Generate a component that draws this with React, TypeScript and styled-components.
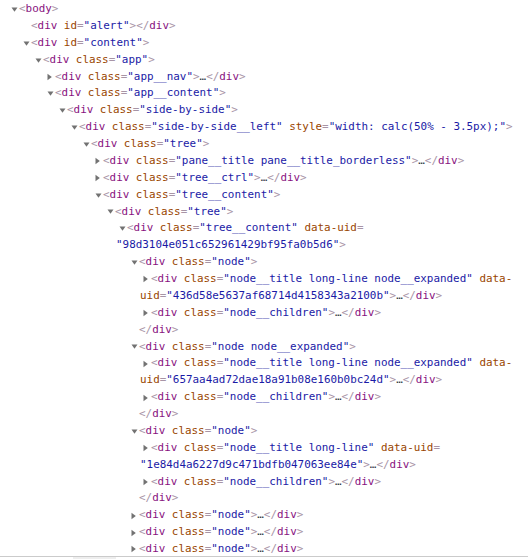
import React from "react";
import styled, { createGlobalStyle } from "styled-components";

const GlobalStyle = createGlobalStyle`
  html, body {
    margin: 0;
    padding: 0;
    background: #ffffff;
    overflow: hidden;
  }
`;

const LINE = 16.875;

const Panel = styled.div`
  width: 528px;
  height: 559px;
  display: flex;
  flex-direction: column;
  background: #ffffff;
  overflow: hidden;
`;

const Tree = styled.ol`
  list-style: none;
  margin: 0;
  padding: 1px 0 0 0;
  height: 556px;
  box-sizing: border-box;
  overflow: hidden;
  flex: 0 0 auto;
`;

const Row = styled.li<{ $depth: number }>`
  padding-left: ${(p) => 8 + 12 * p.$depth}px;
  font-family: "DejaVu Sans Mono", "Liberation Mono", monospace;
  font-size: 10.92px;
  line-height: ${LINE}px;
  white-space: nowrap;
  color: #303942;
`;

const Toggle = styled.span`
  display: inline-flex;
  align-items: center;
  vertical-align: top;
  width: 11px;
  height: ${LINE}px;
  padding-left: 3px;
  box-sizing: border-box;
`;

const Bracket = styled.span`
  color: rgb(168, 148, 166);
`;
const TagName = styled.span`
  color: rgb(136, 18, 128);
`;
const AttrName = styled.span`
  color: rgb(153, 69, 0);
`;
const AttrValue = styled.span`
  color: rgb(26, 26, 166);
`;
const Ellipsis = styled.span`
  color: #303942;
`;

const Footer = styled.div`
  flex: 1 1 auto;
  border-top: 1px solid #cbcbcb;
  display: flex;
  padding-left: 73px;
`;

const Crumb = styled.div`
  width: 43px;
  background: #eeeeee;
`;

type Attr = { name: string; value: string; wrap?: "name" | "eq" };
type RowData = {
  depth: number;
  toggle: "open" | "closed" | "none";
  close?: boolean;
  attrs?: Attr[];
  collapsed?: boolean;
  empty?: boolean;
  tag?: string;
};

const Triangle = ({ open }: { open: boolean }) =>
  open ? (
    <svg width="7" height="5" viewBox="0 0 7 5">
      <path d="M0.5 0.5 L6.5 0.5 L3.5 4.8 Z" fill="#727272" />
    </svg>
  ) : (
    <svg width="5" height="8" viewBox="0 0 5 8">
      <path d="M0.5 0.8 L4.8 4 L0.5 7.2 Z" fill="#727272" />
    </svg>
  );

const renderAttr = (a: Attr, i: number) => {
  let nameNode: React.ReactNode = <AttrName>{a.name}</AttrName>;
  if (a.wrap === "name") {
    const idx = a.name.indexOf("-") + 1;
    nameNode = (
      <>
        <AttrName>{a.name.slice(0, idx)}</AttrName>
        <br />
        <AttrName>{a.name.slice(idx)}</AttrName>
      </>
    );
  }
  return (
    <React.Fragment key={i}>
      {" "}
      {nameNode}
      <Bracket>=</Bracket>
      {a.wrap === "eq" && <br />}
      <AttrValue>"{a.value}"</AttrValue>
    </React.Fragment>
  );
};

const rows: RowData[] = [
  { depth: 0, toggle: "open", tag: "body" },
  { depth: 1, toggle: "none", attrs: [{ name: "id", value: "alert" }], empty: true },
  { depth: 1, toggle: "open", attrs: [{ name: "id", value: "content" }] },
  { depth: 2, toggle: "open", attrs: [{ name: "class", value: "app" }] },
  { depth: 3, toggle: "closed", attrs: [{ name: "class", value: "app__nav" }], collapsed: true },
  { depth: 3, toggle: "open", attrs: [{ name: "class", value: "app__content" }] },
  { depth: 4, toggle: "open", attrs: [{ name: "class", value: "side-by-side" }] },
  {
    depth: 5,
    toggle: "open",
    attrs: [
      { name: "class", value: "side-by-side__left" },
      { name: "style", value: "width: calc(50% - 3.5px);" },
    ],
  },
  { depth: 6, toggle: "open", attrs: [{ name: "class", value: "tree" }] },
  {
    depth: 7,
    toggle: "closed",
    attrs: [{ name: "class", value: "pane__title pane__title_borderless" }],
    collapsed: true,
  },
  { depth: 7, toggle: "closed", attrs: [{ name: "class", value: "tree__ctrl" }], collapsed: true },
  { depth: 7, toggle: "open", attrs: [{ name: "class", value: "tree__content" }] },
  { depth: 8, toggle: "open", attrs: [{ name: "class", value: "tree" }] },
  {
    depth: 9,
    toggle: "open",
    attrs: [
      { name: "class", value: "tree__content" },
      { name: "data-uid", value: "98d3104e051c652961429bf95fa0b5d6", wrap: "eq" },
    ],
  },
  { depth: 10, toggle: "open", attrs: [{ name: "class", value: "node" }] },
  {
    depth: 11,
    toggle: "closed",
    attrs: [
      { name: "class", value: "node__title long-line node__expanded" },
      { name: "data-uid", value: "436d58e5637af68714d4158343a2100b", wrap: "name" },
    ],
    collapsed: true,
  },
  { depth: 11, toggle: "closed", attrs: [{ name: "class", value: "node__children" }], collapsed: true },
  { depth: 10, toggle: "none", close: true },
  { depth: 10, toggle: "open", attrs: [{ name: "class", value: "node node__expanded" }] },
  {
    depth: 11,
    toggle: "closed",
    attrs: [
      { name: "class", value: "node__title long-line node__expanded" },
      { name: "data-uid", value: "657aa4ad72dae18a91b08e160b0bc24d", wrap: "name" },
    ],
    collapsed: true,
  },
  { depth: 11, toggle: "closed", attrs: [{ name: "class", value: "node__children" }], collapsed: true },
  { depth: 10, toggle: "none", close: true },
  { depth: 10, toggle: "open", attrs: [{ name: "class", value: "node" }] },
  {
    depth: 11,
    toggle: "closed",
    attrs: [
      { name: "class", value: "node__title long-line" },
      { name: "data-uid", value: "1e84d4a6227d9c471bdfb047063ee84e", wrap: "eq" },
    ],
    collapsed: true,
  },
  { depth: 11, toggle: "closed", attrs: [{ name: "class", value: "node__children" }], collapsed: true },
  { depth: 10, toggle: "none", close: true },
  { depth: 10, toggle: "closed", attrs: [{ name: "class", value: "node" }], collapsed: true },
  { depth: 10, toggle: "closed", attrs: [{ name: "class", value: "node" }], collapsed: true },
  { depth: 10, toggle: "closed", attrs: [{ name: "class", value: "node" }], collapsed: true },
];

const CloseTag = ({ name }: { name: string }) => (
  <>
    <Bracket>&lt;/</Bracket>
    <TagName>{name}</TagName>
    <Bracket>&gt;</Bracket>
  </>
);

const NodeRow = ({ r }: { r: RowData }) => {
  const name = r.tag ?? "div";
  return (
    <Row $depth={r.depth}>
      <Toggle>{r.toggle !== "none" && <Triangle open={r.toggle === "open"} />}</Toggle>
      {r.close ? (
        <CloseTag name={name} />
      ) : (
        <>
          <Bracket>&lt;</Bracket>
          <TagName>{name}</TagName>
          {(r.attrs ?? []).map(renderAttr)}
          <Bracket>&gt;</Bracket>
          {r.collapsed && <Ellipsis>…</Ellipsis>}
          {(r.collapsed || r.empty) && <CloseTag name={name} />}
        </>
      )}
    </Row>
  );
};

export default function App() {
  return (
    <>
      <GlobalStyle />
      <Panel>
        <Tree>
          {rows.map((r, i) => (
            <NodeRow key={i} r={r} />
          ))}
        </Tree>
        <Footer>
          <Crumb />
        </Footer>
      </Panel>
    </>
  );
}
